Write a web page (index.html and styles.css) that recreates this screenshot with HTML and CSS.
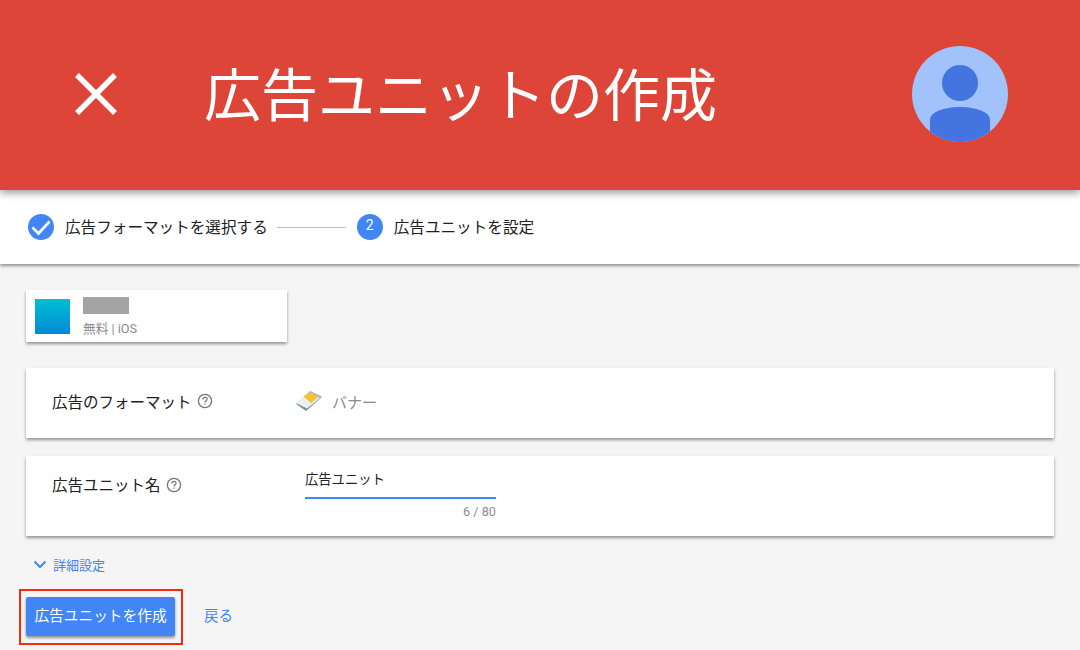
FILE: index.html
```html
<!DOCTYPE html>
<html lang="ja">

<head>
    <meta charset="utf-8">
    <link rel="stylesheet" href="styles.css">
    <title>広告ユニットの作成</title>
</head>

<body>
    <header class="topbar">
        <svg class="close-icon" width="48" height="48" viewBox="0 0 48 48">
            <path d="M5 5 L43 43 M43 5 L5 43" stroke="#fff" stroke-width="5.5" fill="none" />
        </svg>
        <h1 class="title">広告ユニットの作成</h1>
        <svg class="avatar" width="96" height="96" viewBox="0 0 96 96">
            <circle cx="48" cy="48" r="48" fill="#a1c2fa" />
            <circle cx="48" cy="37" r="18" fill="#4374e0" />
            <path d="M18 85.500 V74 C18 66 32 61 48 61 C64 61 78 66 78 74 V85.500 A48 48 0 0 1 18 85.500 Z" fill="#4374e0" />
        </svg>
    </header>

    <nav class="stepper">
        <svg class="step-icon" width="26" height="26" viewBox="0 0 26 26">
            <circle cx="13" cy="13" r="13" fill="#4285f4" />
            <path d="M4.5 13.5 L10.5 19.5 L21.5 7.5" stroke="#fff" stroke-width="2.6" fill="none" />
        </svg>
        <span class="step-label">広告フォーマットを選択する</span>
        <span class="step-line"></span>
        <span class="step-num">2</span>
        <span class="step-label">広告ユニットを設定</span>
    </nav>

    <main class="content">
        <div class="app-card">
            <div class="app-thumb"></div>
            <div class="app-info">
                <div class="app-name"></div>
                <p class="app-meta">無料 | iOS</p>
            </div>
        </div>

        <section class="card format-card">
            <div class="field-label">
                <span>広告のフォーマット</span>
                <svg class="help-icon" width="16" height="16" viewBox="0 0 16 16">
                    <circle cx="8" cy="8" r="6.6" fill="none" stroke="#757575" stroke-width="1.3" />
                    <path d="M5.9 6.4 C5.9 3.7 10.1 3.7 10.1 6.2 C10.1 7.8 8 7.8 8 9.6" fill="none" stroke="#757575" stroke-width="1.2" />
                    <rect x="7.4" y="10.5" width="1.2" height="1.3" fill="#757575" />
                </svg>
            </div>
            <div class="format-value">
                <svg class="banner-icon" width="28" height="22" viewBox="0 0 28 22">
                    <path d="M1 14 L15 1 L27 7 L11 21 Z" fill="#78909c" />
                    <path d="M1 13 L15 1 L27 6.500 L12 18.500 Z" fill="#eceff1" />
                    <path d="M13 2.800 L15 1 L27 6.500 L25 8.200 Z" fill="#b0bec5" />
                    <path d="M8.500 6.500 L14 2.500 L23 7 L16 13 Z" fill="#fbc02d" />
                </svg>
                <span>バナー</span>
            </div>
        </section>

        <section class="card name-card">
            <div class="field-label">
                <span>広告ユニット名</span>
                <svg class="help-icon name-help" width="16" height="16" viewBox="0 0 16 16">
                    <circle cx="8" cy="8" r="6.6" fill="none" stroke="#757575" stroke-width="1.3" />
                    <path d="M5.9 6.4 C5.9 3.7 10.1 3.7 10.1 6.2 C10.1 7.8 8 7.8 8 9.6" fill="none" stroke="#757575" stroke-width="1.2" />
                    <rect x="7.4" y="10.5" width="1.2" height="1.3" fill="#757575" />
                </svg>
            </div>
            <div class="name-field">
                <div class="name-input">広告ユニット</div>
                <div class="name-count">6 / 80</div>
            </div>
        </section>

        <div class="advanced">
            <svg width="14" height="9" viewBox="0 0 14 9">
                <path d="M1.500 1.500 L7 7 L12.500 1.500" fill="none" stroke="#4285f4" stroke-width="2" />
            </svg>
            <span>詳細設定</span>
        </div>

        <div class="actions">
            <div class="highlight">
                <button class="primary-btn">広告ユニットを作成</button>
            </div>
            <span class="back-link">戻る</span>
        </div>
    </main>
</body>

</html>
```

FILE: styles.css
```css
* {
    margin: 0;
    padding: 0;
    box-sizing: border-box;
    font-family: Roboto, "Noto Sans CJK JP", sans-serif;
}

html,
body {
    height: 650px;
    overflow: hidden;
}

body {
    background-color: #f5f5f5;
}

.topbar {
    position: relative;
    z-index: 2;
    height: 190px;
    background-color: #dd4539;
    box-shadow: 0 3px 8px rgba(0, 0, 0, 0.4);
    display: flex;
    align-items: center;
    padding: 0 72px;
}

.close-icon {
    flex: none;
    margin-top: -2px;
}

.title {
    font-size: 57px;
    font-weight: 400;
    color: #fff;
    margin-bottom: 8px;
    margin-left: 84px;
    white-space: nowrap;
    flex: 1;
}

.avatar {
    flex: none;
    margin-top: -2px;
}

.stepper {
    position: relative;
    z-index: 1;
    height: 74px;
    background-color: #fff;
    box-shadow: 0 2px 3px rgba(0, 0, 0, 0.4);
    display: flex;
    align-items: center;
    padding: 0 28px;
}

.step-icon {
    flex: none;
}

.step-label {
    font-size: 15.6px;
    color: #212121;
    margin-left: 11px;
    padding-bottom: 2px;
}

.step-line {
    width: 69px;
    height: 1px;
    background-color: #bdbdbd;
    margin: 0 11px 0 9px;
}

.step-num {
    width: 26px;
    height: 26px;
    border-radius: 50%;
    background-color: #4285f4;
    color: #fff;
    font-size: 14px;
    text-align: center;
    line-height: 23px;
}

.content {
    padding: 26px 26px 0;
}

.app-card {
    width: 261px;
    height: 52px;
    background-color: #fff;
    box-shadow: 0 2px 3px rgba(0, 0, 0, 0.4);
    display: flex;
    padding: 9px 9px;
    margin-bottom: 26px;
}

.app-thumb {
    width: 35px;
    height: 35px;
    background: linear-gradient(180deg, #00c0d0, #0288d8);
    margin-right: 13px;
}

.app-name {
    width: 46px;
    height: 17px;
    margin-top: -2px;
    background-color: #a4a4a4;
}

.app-meta {
    font-size: 12.7px;
    color: #8c8c8c;
    margin-top: 4px;
}

.card {
    background-color: #fff;
    box-shadow: 0 2px 3px rgba(0, 0, 0, 0.4);
    display: flex;
    align-items: flex-start;
    padding: 0 26px;
}

.format-card {
    height: 70px;
    margin-bottom: 18px;
    padding-top: 22px;
}

.name-card {
    height: 80px;
    padding-top: 17px;
}

.field-label {
    width: 253px;
    display: flex;
    align-items: center;
    font-size: 15.5px;
    color: #212121;
    flex: none;
}

.help-icon {
    margin-left: 5px;
}

.name-help {
    margin-top: 2px;
}

.format-value {
    display: flex;
    align-items: center;
    margin-left: -10px;
    font-size: 15px;
    color: #8c8c8c;
}

.banner-icon {
    margin-right: 9px;
}

.name-field {
    width: 191px;
}

.name-input {
    font-size: 13.3px;
    color: #212121;
    border-bottom: 2px solid #4285f4;
    box-sizing: content-box;
    margin-top: -4px;
    height: 28px;
}

.name-count {
    font-size: 12.7px;
    color: #8c8c8c;
    text-align: right;
    margin-top: 5px;
}

.advanced {
    display: flex;
    align-items: center;
    margin-top: 19px;
    padding-left: 7px;
    font-size: 13px;
    color: #4285f4;
}

.advanced span {
    margin-left: 6px;
}

.actions {
    display: flex;
    align-items: center;
    margin: 15px 0 0 -7px;
}

.highlight {
    border: 2px solid #f52c0c;
    padding: 6px 6px 7px 5px;
}

.primary-btn {
    display: block;
    width: 149px;
    height: 39px;
    padding-bottom: 5px;
    border: 0;
    border-radius: 2px;
    background-color: #4285f4;
    color: #fff;
    font-size: 14.7px;
    box-shadow: 0 2px 3px rgba(0, 0, 0, 0.4);
}

.back-link {
    font-size: 14.5px;
    color: #4285f4;
    margin-left: 21px;
    padding-bottom: 6px;
}
```
